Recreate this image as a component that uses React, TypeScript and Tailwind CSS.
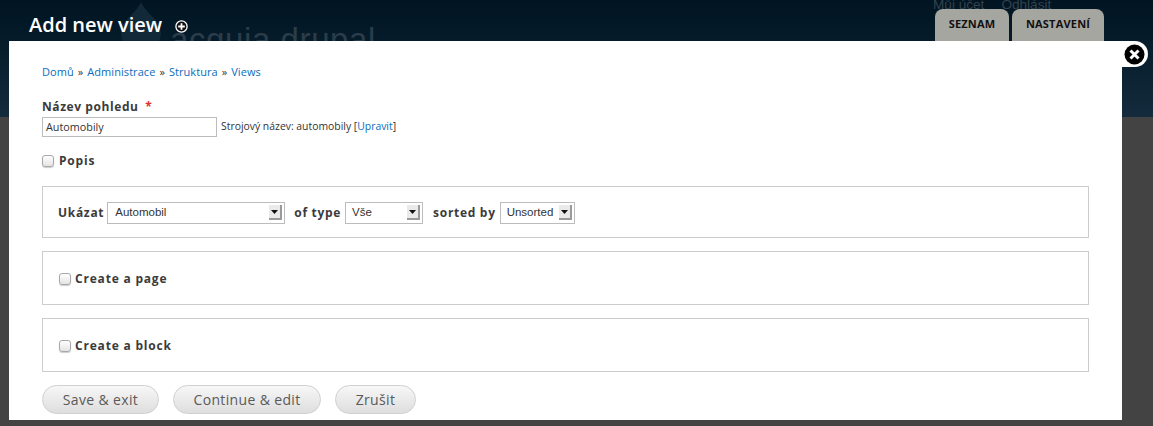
import React from "react";

function Select({ value, w, pl }: { value: string; w: string; pl: string }) {
  return (
    <div className={`flex h-[22px] items-center justify-between border border-[#bcbcbc] bg-white pr-[2px] text-[11.5px] font-normal tracking-normal text-[#333] font-['Liberation_Sans',sans-serif] ${pl} ${w}`}>
      <span>{value}</span>
      <span className="flex h-[15px] w-[13px] items-center justify-center border-r-2 border-b-2 border-[#9a9a9a] bg-[#eaeaea]">
        <svg width="7" height="4" viewBox="0 0 7 4"><path d="M0 0h7L3.5 4z" fill="#111" /></svg>
      </span>
    </div>
  );
}

function Check() {
  return (
    <span className="inline-block h-[12px] w-[12px] rounded-[3px] border border-[#a8a8a8] bg-gradient-to-b from-[#ffffff] to-[#e4e4e4] shadow-[0_1px_1px_rgba(0,0,0,0.2)]" />
  );
}

function Btn({ children, w }: { children: React.ReactNode; w: string }) {
  return (
    <div className={`flex h-[29px] items-center justify-center rounded-[15px] border border-[#d0d0d0] bg-gradient-to-b from-[#f7f7f7] to-[#dedede] text-[14px] tracking-[0.35px] text-[#5a5a5a] ${w}`}>
      {children}
    </div>
  );
}

export default function App() {
  return (
    <div className="relative h-[426px] w-full overflow-hidden bg-[#434343] font-['Open_Sans',sans-serif]">
      <header className="relative h-[117px] bg-gradient-to-b from-[#011421] to-[#132b3c]">
        <div className="absolute left-[170px] top-[21px] text-[33px] leading-[38px] tracking-[0.6px] text-[#2b3d4a] font-['Liberation_Sans',sans-serif]">acquia drupal</div>
        <svg className="absolute left-[118px] top-[2px]" width="46" height="40" viewBox="0 0 46 40">
          <path d="M23 0C28 12 43 18 43 31a20 18 0 0 1-40 0C3 18 18 12 23 0z" fill="#12293a" />
        </svg>
        <div className="absolute left-[933px] top-0 flex gap-[17px] text-[13.6px] leading-[10px] text-[#33424d] font-['Liberation_Sans',sans-serif]">
          <span>Můj účet</span>
          <span>Odhlásit</span>
        </div>
        <div className="relative flex items-start justify-between pl-[29px] pr-[49px]">
          <div className="flex items-center pt-[11px]">
            <h1 className="text-[20px] leading-[28px] font-semibold text-white">Add new view</h1>
            <svg className="ml-[13px] mt-[3px]" width="13" height="13" viewBox="0 0 13 13">
              <circle cx="6.5" cy="6.5" r="5.6" fill="#111" stroke="#fff" strokeWidth="1.3" />
              <path d="M6.5 3.2v6.6M3.2 6.5h6.6" stroke="#fff" strokeWidth="1.8" />
            </svg>
          </div>
          <nav className="flex gap-[3px] pt-[9px]">
            <div className="flex h-[32px] w-[74px] justify-center rounded-t-[8px] bg-[#a6a6a1] pt-[7px] text-[11px] font-bold tracking-[0.2px] text-[#111]">SEZNAM</div>
            <div className="flex h-[32px] w-[92px] justify-center rounded-t-[8px] bg-[#a6a6a1] pt-[7px] text-[11px] font-bold tracking-[0.2px] text-[#111]">NASTAVENÍ</div>
          </nav>
        </div>
      </header>

      <div className="absolute left-[1100px] top-[41px] flex h-[26px] w-[48px] items-center justify-end rounded-r-[13px] bg-white pr-[3px]">
        <svg width="21" height="21" viewBox="0 0 21 21">
          <circle cx="10.5" cy="10.5" r="10" fill="#000" />
          <path d="M6.5 6.5l8 8M14.5 6.5l-8 8" stroke="#fff" strokeWidth="3" />
        </svg>
      </div>

      <main className="absolute left-[9px] top-[41px] h-[379px] w-[1113px] bg-white px-[33px] pt-[24px] text-[#333]">
        <div className="flex h-[14px] items-center gap-[4px] text-[11px] tracking-[0.06px] text-[#333]">
          <a className="text-[#0a6dbd]">Domů</a><span>»</span>
          <a className="text-[#0a6dbd]">Administrace</a><span>»</span>
          <a className="text-[#0a6dbd]">Struktura</a><span>»</span>
          <a className="text-[#0a6dbd]">Views</a>
        </div>
        <label className="mt-[20px] block h-[16px] text-[12px] leading-[16px] font-bold tracking-[0.58px] text-[#3b3b3b]">
          Název pohledu <span className="ml-[3px] text-[#e0302a]">*</span>
        </label>
        <div className="mt-[2px] flex items-center">
          <div className="flex h-[20px] w-[175px] items-center border border-[#bcbcbc] pl-[3px] text-[10.8px] text-[#333]">Automobily</div>
          <span className="ml-[4px] text-[10.4px] text-[#333]">Strojový název: automobily [<a className="text-[#0a6dbd]">Upravit</a>]</span>
        </div>
        <div className="mt-[16px] flex h-[16px] items-center gap-[5px] text-[12px] font-bold tracking-[0.8px] text-[#3b3b3b]">
          <Check /> Popis
        </div>

        <section className="mt-[17px] flex h-[52px] items-center border border-[#cccccc] pl-[15px] pt-[1px] text-[12px] font-bold tracking-[0.7px] text-[#3b3b3b]">
          <span>Ukázat</span>
          <div className="ml-[3px]"><Select value="Automobil" w="w-[178px]" pl="pl-[7px]" /></div>
          <span className="ml-[9px]">of type</span>
          <div className="ml-[4px]"><Select value="Vše" w="w-[78px]" pl="pl-[6px]" /></div>
          <span className="ml-[10px]">sorted by</span>
          <div className="ml-[4px]"><Select value="Unsorted" w="w-[75px]" pl="pl-[6px]" /></div>
        </section>

        <section className="mt-[13px] flex h-[54px] items-center gap-[4px] border border-[#cccccc] pl-[16px] pt-[1px] text-[12px] font-bold tracking-[0.8px] text-[#3b3b3b]">
          <Check /> Create a page
        </section>

        <section className="mt-[13px] flex h-[54px] items-center gap-[4px] border border-[#cccccc] pl-[16px] pt-[1px] text-[12px] font-bold tracking-[0.8px] text-[#3b3b3b]">
          <Check /> Create a block
        </section>

        <div className="mt-[13px] flex gap-[14px]">
          <Btn w="w-[117px]">Save &amp; exit</Btn>
          <Btn w="w-[148px]">Continue &amp; edit</Btn>
          <Btn w="w-[81px]">Zrušit</Btn>
        </div>
      </main>
    </div>
  );
}
